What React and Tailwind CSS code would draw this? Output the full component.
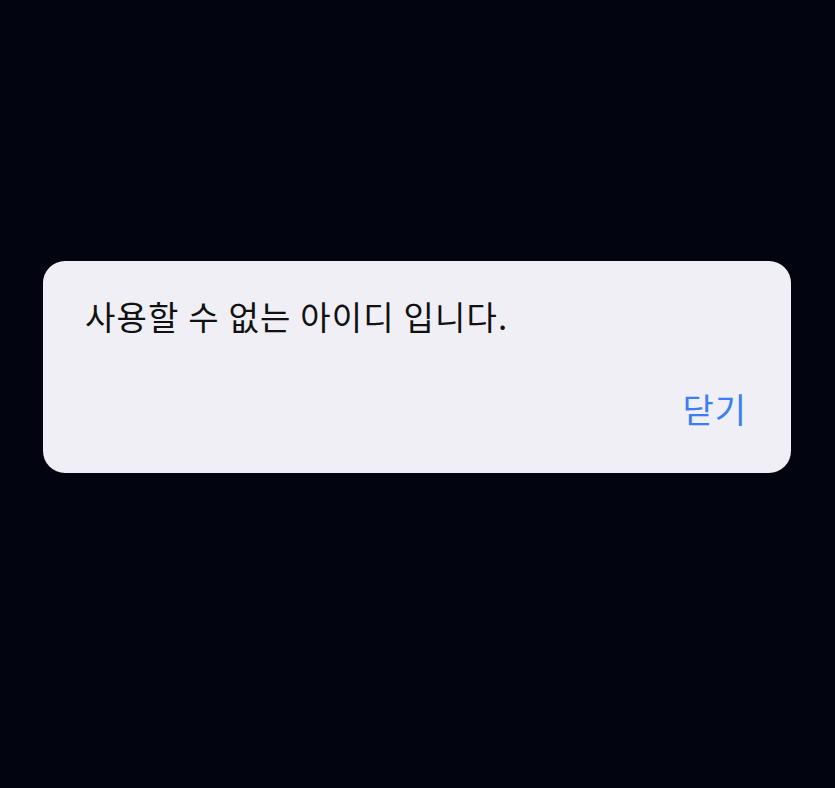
export default function App() {
  return (
    <div className="w-[835px] h-[788px] bg-[#02040f] flex flex-col" style={{ fontFamily: '"Noto Sans CJK KR", "Noto Sans", sans-serif' }}>
      <div className="mt-[261px] ml-[43px] w-[748px] h-[212px] rounded-[22px] bg-[#f0eff5] flex flex-col px-[42px] pt-[31px]">
        <div className="text-[33px] leading-[48px] text-[#111] tracking-[1.2px]">사용할 수 없는 아이디 입니다.</div>
        <div className="flex justify-end mt-[45px] pr-[2px]">
          <span className="text-[34px] leading-[48px] text-[#3a7ef5] tracking-[1px]">닫기</span>
        </div>
      </div>
    </div>
  );
}
